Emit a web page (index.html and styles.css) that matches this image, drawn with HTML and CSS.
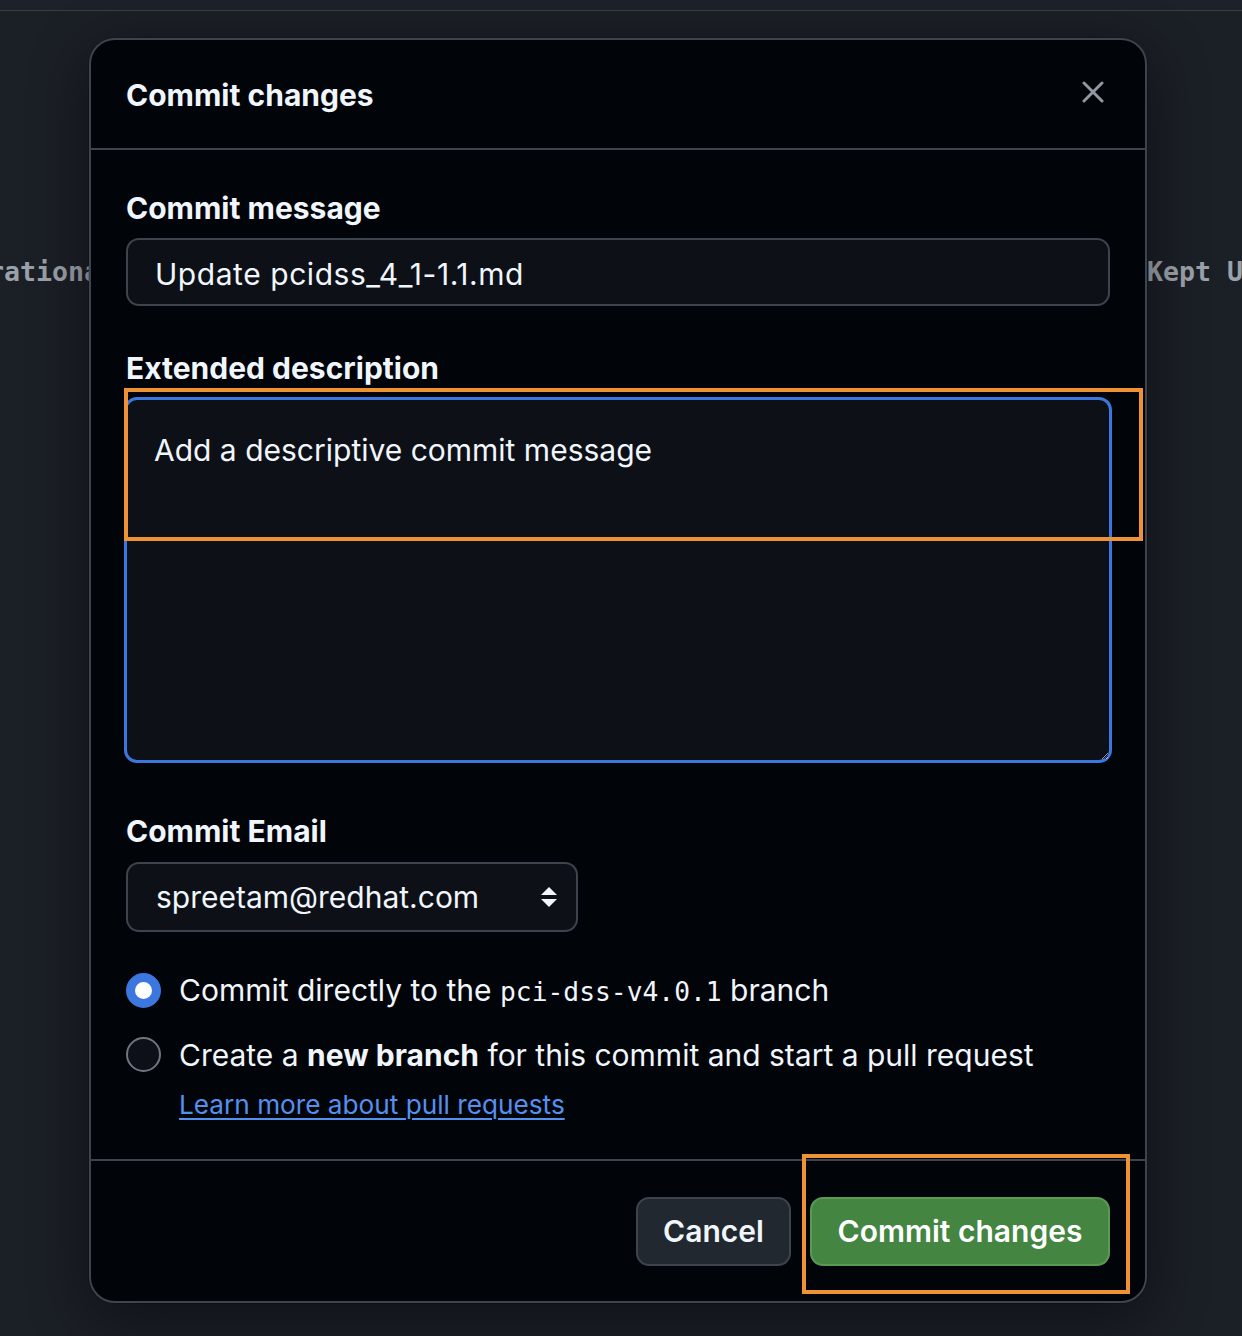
FILE: index.html
```html
<!DOCTYPE html>
<html lang="en">
<head>
<meta charset="utf-8">
<title>Commit changes</title>
<link rel="stylesheet" href="styles.css">
</head>
<body>
<div class="page">
  <div class="topbar"></div>
  <div class="backdrop-row">
    <span class="bg-code bg-left">Operational</span>
    <span class="bg-code bg-right">Kept Up to date</span>
  </div>
</div>

<div class="dialog" role="dialog" aria-label="Commit changes">
  <div class="dialog-header">
    <h1 class="dialog-title">Commit changes</h1>
    <button class="close-btn" aria-label="Close">
      <svg width="22" height="22" viewBox="0 0 22 22"><path d="M2 2 L20 20 M20 2 L2 20" stroke="#9198a1" stroke-width="3" stroke-linecap="round"/></svg>
    </button>
  </div>

  <div class="dialog-body">
    <label class="field-label label-msg">Commit message</label>
    <div class="text-input">Update pcidss_4_1-1.1.md</div>

    <label class="field-label label-desc">Extended description</label>
    <textarea class="desc-area">Add a descriptive commit message</textarea>

    <label class="field-label label-email">Commit Email</label>
    <div class="select-box">
      <span>spreetam@redhat.com</span>
      <svg class="select-arrow" width="18" height="22" viewBox="0 0 18 22"><path d="M9 1 L17 9 L1 9 Z M1 13 L17 13 L9 21 Z" fill="#f0f6fc"/></svg>
    </div>

    <div class="radio-row row-direct">
      <span class="radio checked"></span>
      <span class="radio-text">Commit directly to the <code class="mono">pci-dss-v4.0.1</code> branch</span>
    </div>
    <div class="radio-row row-new">
      <span class="radio"></span>
      <span class="radio-text">Create a <strong>new branch</strong> for this commit and start a pull request</span>
    </div>
    <a class="learn-link" href="#">Learn more about pull requests</a>
  </div>

  <div class="dialog-footer">
    <button class="btn btn-cancel">Cancel</button>
    <button class="btn btn-primary">Commit changes</button>
  </div>
</div>

<div class="annot annot-desc"></div>
<div class="annot annot-btn"></div>
</body>
</html>
```

FILE: styles.css
```css
* { box-sizing: border-box; }

html, body {
  margin: 0;
  padding: 0;
  width: 1242px;
  height: 1336px;
  overflow: hidden;
  background: #1b1f26;
  font-family: Inter, "Noto Sans", "Liberation Sans", sans-serif;
  color: #f0f6fc;
  color-scheme: dark;
}

.page {
  width: 1242px;
  height: 1336px;
}

.topbar {
  height: 11px;
  border-bottom: 1px solid #3a3f47;
  background: #1d2129;
}

.backdrop-row {
  display: grid;
  grid-template-columns: 1147px 1fr;
  margin-top: 245px;
  white-space: nowrap;
  overflow: hidden;
}

.bg-code {
  font-family: "DejaVu Sans Mono", "Liberation Mono", monospace;
  font-weight: bold;
  font-size: 26.6px;
  line-height: 32px;
  color: #9ba1aa;
}

.bg-left { margin-left: -60px; }

/* modal dialog overlays the page */
.dialog {
  position: absolute;
  left: 89px;
  top: 38px;
  width: 1058px;
  height: 1265px;
  border: 2px solid #3d444d;
  border-radius: 26px;
  background: #010409;
  box-shadow: 0 0 0 1px rgba(0,0,0,0.15), 0 16px 60px rgba(0,0,0,0.45);
  display: flex;
  flex-direction: column;
  overflow: hidden;
}

.dialog-header {
  height: 110px;
  flex: 0 0 auto;
  display: flex;
  align-items: center;
  justify-content: space-between;
  padding: 0 37px 0 35px;
  border-bottom: 2px solid #3d444d;
}

.dialog-title {
  margin: 0;
  font-size: 30px;
  font-weight: 700;
  line-height: 36px;
  margin-top: 2px;
}

.close-btn {
  background: none;
  border: none;
  padding: 0;
  width: 30px;
  height: 30px;
  display: flex;
  align-items: center;
  justify-content: center;
  margin-top: -4px;
}

.dialog-body {
  flex: 1 1 auto;
  display: flex;
  flex-direction: column;
  align-items: flex-start;
  padding: 0 35px;
}

.field-label {
  display: block;
  font-size: 30px;
  font-weight: 700;
  line-height: 36px;
}

.label-msg { margin-top: 40px; }
.label-desc { margin-top: 44px; }
.label-email { margin-top: 50px; }

.text-input {
  margin-top: 12px;
  width: 100%;
  height: 68px;
  border: 2px solid #3d444d;
  border-radius: 13px;
  background: #0d1117;
  padding: 3px 27px 0;
  display: flex;
  align-items: center;
  font-size: 30px;
  line-height: 36px;
  letter-spacing: 0.55px;
}

.desc-area {
  margin: 11px 0 0 -2px;
  width: calc(100% + 4px);
  height: 366px;
  border: 3px solid #3c77e0;
  outline: none;
  border-radius: 13px;
  background: #0d1117;
  color: #f0f6fc;
  font-family: Inter, "Noto Sans", "Liberation Sans", sans-serif;
  font-size: 30px;
  line-height: 36px;
  padding: 32px 27px 30px;
  resize: vertical;
  display: block;
}

.select-box {
  margin-top: 13px;
  width: 452px;
  height: 70px;
  border: 2px solid #3d444d;
  border-radius: 13px;
  background: #0d1117;
  padding: 0 18px 0 28px;
  display: flex;
  align-items: center;
  justify-content: space-between;
  font-size: 30px;
  line-height: 36px;
}

.radio-row {
  display: flex;
  align-items: center;
  gap: 18px;
  font-size: 30px;
  line-height: 36px;
}

.row-direct { margin-top: 40px; }
.row-new { margin-top: 27px; }

.radio {
  width: 35px;
  height: 35px;
  border-radius: 50%;
  flex: 0 0 auto;
  border: 2px solid #6e7681;
  background: #0d1117;
  margin-top: -2px;
}

.radio.checked {
  border: 9px solid #3c77e0;
  background: #ffffff;
}

.radio-text strong { font-weight: 700; }

.mono {
  font-family: "DejaVu Sans Mono", "Liberation Mono", monospace;
  font-size: 26.3px;
}

.learn-link {
  margin-top: 14px;
  margin-left: 53px;
  font-size: 26.2px;
  line-height: 36px;
  color: #5590ee;
  text-decoration: underline;
  text-underline-offset: 4px;
  text-decoration-thickness: 2px;
}

.dialog-footer {
  flex: 0 0 auto;
  height: 142px;
  border-top: 2px solid #3d444d;
  display: flex;
  align-items: center;
  justify-content: flex-end;
  gap: 19px;
  padding: 0 35px 0 35px;
}

.btn {
  height: 69px;
  border-radius: 13px;
  font-family: Inter, "Noto Sans", "Liberation Sans", sans-serif;
  font-size: 30px;
  font-weight: 600;
  color: #f0f6fc;
  padding: 0;
  white-space: nowrap;
}

.btn-cancel {
  width: 155px;
  background: #212830;
  border: 2px solid #3d444d;
}

.btn-primary {
  width: 300px;
  background: #438541;
  border: 2px solid #5a9a55;
  color: #ffffff;
}

/* orange annotation boxes drawn over the screenshot */
.annot {
  position: absolute;
  border: 4px solid #ef9236;
  pointer-events: none;
}

.annot-desc {
  left: 124px;
  top: 388px;
  width: 1019px;
  height: 153px;
}

.annot-btn {
  left: 802px;
  top: 1154px;
  width: 328px;
  height: 140px;
}
```
